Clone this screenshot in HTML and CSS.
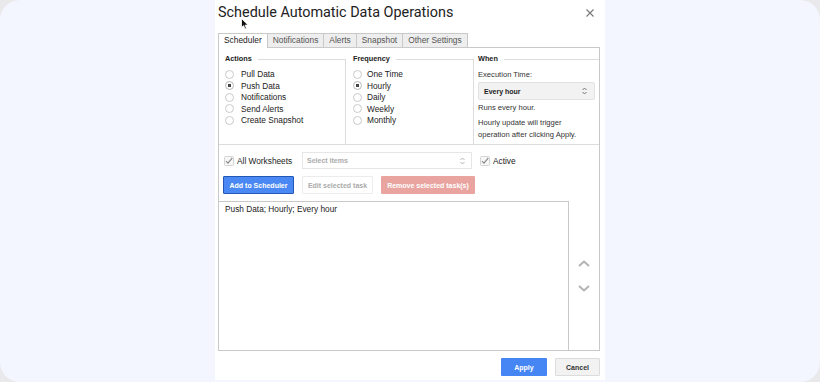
FILE: index.html
```html
<!DOCTYPE html>
<html lang="en">
<head>
    <meta charset="UTF-8">
    <meta name="viewport" content="width=device-width, initial-scale=1.0">
    <title>Schedule Automatic Data Operations</title>
    <link rel="stylesheet" href="styles.css">
</head>
<body>

    <div class="frame">
        <div class="dialog">
            <div class="dialog-head">
                <h1 class="title">Schedule Automatic Data Operations</h1>
                <svg class="close" width="8" height="8" viewBox="0 0 8 8"><path d="M0.5 0.5L7.5 7.5M7.5 0.5L0.5 7.5" stroke="#777" stroke-width="1.1" fill="none"/></svg>
            </div>

            <div class="tabs">
                <span class="tab active">Scheduler</span>
                <span class="tab">Notifications</span>
                <span class="tab">Alerts</span>
                <span class="tab">Snapshot</span>
                <span class="tab">Other Settings</span>
            </div>

            <div class="panel">
                <div class="options">
                    <div class="group">
                        <div class="legend"><span>Actions</span><i class="rule"></i></div>
                        <div class="group-body">
                            <label class="radio"><span class="dot"></span>Pull Data</label>
                            <label class="radio"><span class="dot checked"></span>Push Data</label>
                            <label class="radio"><span class="dot"></span>Notifications</label>
                            <label class="radio"><span class="dot"></span>Send Alerts</label>
                            <label class="radio"><span class="dot"></span>Create Snapshot</label>
                        </div>
                    </div>
                    <div class="group freq">
                        <div class="legend"><span>Frequency</span><i class="rule"></i></div>
                        <div class="group-body">
                            <label class="radio"><span class="dot"></span>One Time</label>
                            <label class="radio"><span class="dot checked"></span>Hourly</label>
                            <label class="radio"><span class="dot"></span>Daily</label>
                            <label class="radio"><span class="dot"></span>Weekly</label>
                            <label class="radio"><span class="dot"></span>Monthly</label>
                        </div>
                    </div>
                    <div class="group when">
                        <div class="legend"><span>When</span><i class="rule"></i></div>
                        <div class="group-body">
                            <div class="note">Execution Time:</div>
                            <div class="time-select">
                                <span>Every hour</span>
                                <svg width="5" height="8" viewBox="0 0 5 8"><path d="M0.5 3L2.5 1L4.5 3M0.5 5L2.5 7L4.5 5" stroke="#666" stroke-width="0.9" fill="none"/></svg>
                            </div>
                            <div class="note">Runs every hour.</div>
                            <div class="note hint">Hourly update will trigger<br>operation after clicking Apply.</div>
                        </div>
                    </div>
                </div>

                <div class="filter-row">
                    <label class="check all">
                        <svg class="box" width="10" height="10" viewBox="0 0 10 10"><rect x="0.5" y="0.5" width="9" height="9" rx="1" fill="#f7f7f7" stroke="#d4d4d4"/><path d="M2 5.2L4 7.2L8.3 1.8" stroke="#888" stroke-width="1.1" fill="none"/></svg>
                        All Worksheets
                    </label>
                    <div class="items-select">
                        <span>Select items</span>
                        <svg width="5" height="8" viewBox="0 0 5 8"><path d="M0.5 3L2.5 1L4.5 3M0.5 5L2.5 7L4.5 5" stroke="#aaa" stroke-width="0.9" fill="none"/></svg>
                    </div>
                    <label class="check">
                        <svg class="box" width="10" height="10" viewBox="0 0 10 10"><rect x="0.5" y="0.5" width="9" height="9" rx="1" fill="#f7f7f7" stroke="#d4d4d4"/><path d="M2 5.2L4 7.2L8.3 1.8" stroke="#888" stroke-width="1.1" fill="none"/></svg>
                        Active
                    </label>
                </div>

                <div class="button-row">
                    <button class="btn btn-add">Add to Scheduler</button>
                    <button class="btn btn-edit">Edit selected task</button>
                    <button class="btn btn-remove">Remove selected task(s)</button>
                </div>

                <div class="list-area">
                    <div class="task-list">
                        <div class="task">Push Data; Hourly; Every hour</div>
                    </div>
                    <div class="movers">
                        <svg width="12" height="7" viewBox="0 0 12 7"><path d="M1 6L6 1.5L11 6" stroke="#b3b3b3" stroke-width="2" fill="none"/></svg>
                        <svg width="12" height="7" viewBox="0 0 12 7"><path d="M1 1L6 5.5L11 1" stroke="#b3b3b3" stroke-width="2" fill="none"/></svg>
                    </div>
                </div>
            </div>

            <div class="footer">
                <button class="btn btn-apply">Apply</button>
                <button class="btn btn-cancel">Cancel</button>
            </div>
        </div>

        <svg class="cursor" width="8" height="12" viewBox="0 0 8 12"><path d="M0.5 0.5L0.5 9.5L2.6 7.6L4 11L5.4 10.4L4.1 7.1L7 7.1Z" fill="#111" stroke="#fff" stroke-width="0.8"/></svg>
    </div>

</body>
</html>
```

FILE: styles.css
```css
body { margin: 0; background: #e9e9eb; font-family: "Liberation Sans", Arial, sans-serif; color: #222; }
.frame { position: relative; height: 382px; border-radius: 20px; background: #f3f6fe; display: flex; justify-content: center; }
.dialog { width: 390px; height: 380px; background: #fff; padding: 0 5px 0 3px; box-sizing: border-box; }

.dialog-head { height: 25px; margin-bottom: 8px; display: flex; align-items: center; justify-content: space-between; }
.title { margin: 0; font-family: Roboto, "Liberation Sans", sans-serif; font-size: 14.4px; font-weight: 400; color: #222; line-height: 25px; }
.close { margin-right: 6px; }

.tabs { display: flex; height: 14px; }
.tab { height: 14px; box-sizing: border-box; padding: 0 5px; margin-left: -1px; border: 1px solid #c9c9c9; border-bottom: 0; background: #eee; color: #555; font-size: 8.4px; line-height: 13px; }
.tab:first-child { margin-left: 0; }
.tab.active { background: #fff; color: #222; height: 15px; position: relative; z-index: 1; }

.panel { height: 304px; box-sizing: border-box; border: 1px solid #c9c9c9; }

.options { display: grid; grid-template-columns: 127px 128px 1fr; padding-top: 6px; border-bottom: 1px solid #ddd; }
.legend { display: flex; height: 10px; padding-left: 6px; }
.legend span { font-size: 7.3px; font-weight: bold; line-height: 10px; }
.legend .rule { flex: 1; margin: 5px 0 0 6px; border-top: 1px solid #ddd; border-right: 1px solid #ddd; }
.group-body { height: 80px; box-sizing: border-box; padding: 4.5px 0 0 6px; border-right: 1px solid #ddd; }
.freq .legend, .freq .group-body { padding-left: 7px; }
.when .legend { padding-left: 4px; }
.when .legend .rule, .when .group-body { border-right: 0; }
.when .group-body { padding-left: 4px; }

.radio { display: flex; align-items: center; height: 11.5px; font-size: 8.3px; }
.dot { width: 9px; height: 9px; box-sizing: border-box; border: 1px solid #cacaca; border-radius: 50%; background: #fff; margin-right: 7px; }
.freq .dot { margin-right: 5px; }
.dot.checked { border-color: #b8b8b8; background: radial-gradient(circle, #444 0 1.5px, #fff 2px); }

.note { font-size: 7.6px; line-height: 11.5px; color: #333; }
.hint { line-height: 12px; margin-top: 3px; }
.time-select { height: 18px; width: 117px; box-sizing: border-box; margin: 2px 0 2px; padding: 0 7px 0 5px; display: flex; align-items: center; justify-content: space-between; background: #f2f2f2; border: 1px solid #e2e2e2; border-radius: 2px; font-size: 7px; font-weight: bold; }

.filter-row { display: flex; align-items: center; height: 17px; margin-top: 7px; padding-left: 5px; font-size: 8.3px; }
.check { display: flex; align-items: center; }
.check .box { margin-right: 3px; }
.check.all { width: 78px; }
.items-select { width: 170px; height: 17px; box-sizing: border-box; margin-right: 8px; padding: 0 6px 0 4px; display: flex; align-items: center; justify-content: space-between; border: 1px solid #e6e6e6; color: #aaa; font-size: 7px; font-weight: bold; }

.button-row { display: flex; gap: 8px; margin-top: 7px; padding-left: 4px; }
.btn { height: 18px; box-sizing: border-box; padding: 0; border: 1px solid transparent; border-radius: 1px; font-family: "Liberation Sans", Arial, sans-serif; font-size: 7px; font-weight: bold; cursor: pointer; }
.btn-add { width: 71px; background: #4a89f3; border-color: #2457b3; color: #fff; }
.btn-edit { width: 71px; background: #fff; border-color: #ececec; color: #aaa; }
.btn-remove { width: 94px; background: #e9a4a0; color: #fff; }

.list-area { display: flex; margin-top: 7px; height: 149px; }
.task-list { width: 350px; border-top: 1px solid #c9c9c9; border-right: 1px solid #c9c9c9; padding: 2px 6px; box-sizing: border-box; }
.task { font-size: 8.3px; line-height: 11px; }
.movers { flex: 1; display: flex; flex-direction: column; align-items: center; gap: 18px; padding-top: 59px; }

.footer { display: flex; justify-content: flex-end; gap: 8px; margin-top: 7px; }
.btn-apply { width: 46px; background: #4586f4; color: #fff; }
.btn-cancel { width: 45px; background: #f2f2f2; border-color: #dcdcdc; color: #333; }

.cursor { position: absolute; left: 241px; top: 18px; }
```
